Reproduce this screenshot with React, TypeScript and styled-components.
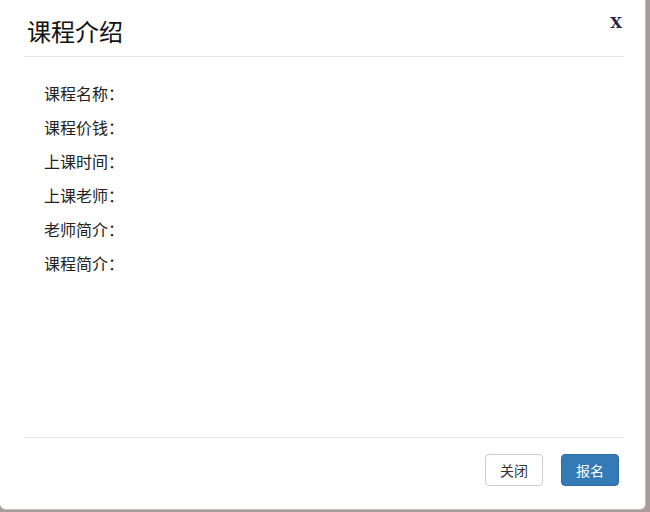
import React from "react";
import styled, { createGlobalStyle } from "styled-components";

const Global = createGlobalStyle`
  html, body { margin: 0; padding: 0; }
  body {
    background: #a89b99;
    font-family: "Noto Sans CJK SC", "Liberation Sans", sans-serif;
    width: 650px;
    height: 512px;
    overflow: hidden;
  }
`;

const Modal = styled.div`
  width: 646px;
  height: 510px;
  box-sizing: border-box;
  background: #fff;
  border-right: 1px solid #c7bcba;
  border-bottom: 1px solid #c7bcba;
  border-radius: 0 0 6px 6px;
  display: flex;
  flex-direction: column;
  padding: 0 21px 0 24px;
`;

const Header = styled.div`
  height: 57px;
  box-sizing: border-box;
  padding: 6px 0 0 3px;
  border-bottom: 1px solid #e5e5e5;
  display: flex;
  align-items: center;
  justify-content: space-between;
`;

const Title = styled.h4`
  margin: 0;
  font-size: 24px;
  font-weight: 400;
  color: #111;
  line-height: 1;
`;

const Close = styled.button`
  align-self: flex-start;
  margin-top: 8px;
  margin-right: 2px;
  border: 0;
  background: transparent;
  padding: 0;
  font-family: "DejaVu Serif", "Liberation Serif", serif;
  font-weight: 700;
  font-size: 15px;
  color: #23234a;
  cursor: pointer;
`;

const Body = styled.div`
  flex: 1;
  padding: 19px 20px 0;
  border-bottom: 1px solid #e5e5e5;
`;

const Row = styled.div`
  height: 34px;
  line-height: 34px;
  font-size: 16px;
  color: #222;
`;

const Footer = styled.div`
  height: 71px;
  box-sizing: border-box;
  padding: 16px 5px 0 0;
  display: flex;
  justify-content: flex-end;
  align-items: flex-start;
  gap: 18px;
`;

const Button = styled.button<{ $primary?: boolean }>`
  height: 32px;
  width: 58px;
  border-radius: 4px;
  font-family: "Noto Sans CJK SC", sans-serif;
  font-size: 14px;
  line-height: 1;
  cursor: pointer;
  border: 1px solid ${(p) => (p.$primary ? "#2e6da4" : "#ccc")};
  background: ${(p) => (p.$primary ? "#337ab7" : "#fff")};
  color: ${(p) => (p.$primary ? "#fff" : "#333")};
`;

const labels = ["课程名称：", "课程价钱：", "上课时间：", "上课老师：", "老师简介：", "课程简介："];

export default function App() {
  return (
    <>
      <Global />
      <Modal>
        <Header>
          <Title>课程介绍</Title>
          <Close>X</Close>
        </Header>
        <Body>
          {labels.map((l) => (
            <Row key={l}>{l}</Row>
          ))}
        </Body>
        <Footer>
          <Button>关闭</Button>
          <Button $primary>报名</Button>
        </Footer>
      </Modal>
    </>
  );
}
